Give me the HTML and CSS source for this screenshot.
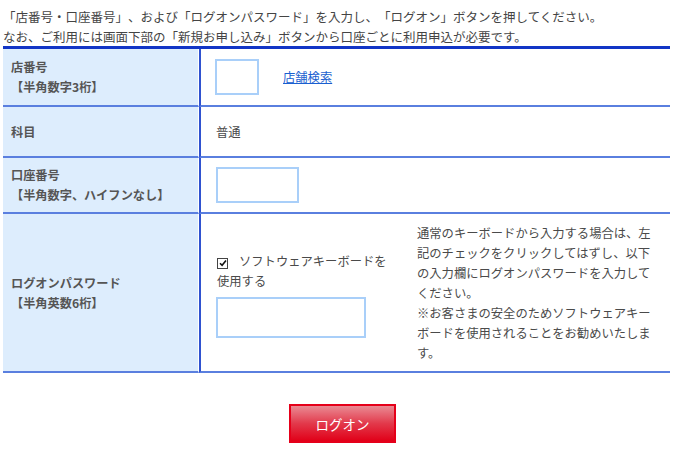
FILE: index.html
```html
<!DOCTYPE html>
<html lang="ja">
<head>
<meta charset="utf-8">
<title>ログオン</title>
<link rel="stylesheet" href="styles.css">
</head>
<body>
<div class="page">
  <p class="intro">「店番号・口座番号」、および「ログオンパスワード」を入力し、「ログオン」ボタンを押してください。<br>なお、ご利用には画面下部の「新規お申し込み」ボタンから口座ごとに利用申込が必要です。</p>
  <div class="form">
    <div class="label r1"><span>店番号</span><span class="note">【半角数字3桁】</span></div>
    <div class="value r1"><input class="inp inp-branch" type="text"><a class="link" href="#">店舗検索</a></div>

    <div class="label r2"><span>科目</span></div>
    <div class="value r2"><span class="plain">普通</span></div>

    <div class="label r3"><span>口座番号</span><span class="note">【半角数字、ハイフンなし】</span></div>
    <div class="value r3"><input class="inp inp-account" type="text"></div>

    <div class="label r4"><span>ログオンパスワード</span><span class="note">【半角英数6桁】</span></div>
    <div class="value r4">
      <div class="pw">
        <label class="swk"><span class="cb"><svg width="8" height="8" viewBox="0 0 8 8"><path d="M1 4.2 L3.1 6.3 L7 1.5" fill="none" stroke="#111" stroke-width="1.6"/></svg></span>ソフトウェアキーボードを使用する</label>
        <input class="inp inp-pw" type="password">
      </div>
      <p class="help">通常のキーボードから入力する場合は、左記のチェックをクリックしてはずし、以下の入力欄にログオンパスワードを入力してください。<br>※お客さまの安全のためソフトウェアキーボードを使用されることをお勧めいたします。</p>
    </div>
  </div>
  <div class="actions">
    <button class="btn" type="button">ログオン</button>
  </div>
</div>
</body>
</html>
```
FILE: styles.css
```css
html, body {
  margin: 0;
  padding: 0;
  background: #fff;
}
body {
  font-family: "Noto Sans CJK JP", "Noto Sans", sans-serif;
  font-size: 12.3px;
  color: #444;
  text-spacing-trim: space-all;
}
.page {
  padding: 7px 0 0 3px;
  width: 667px;
}
.intro {
  margin: 0;
  line-height: 19.5px;
  font-size: 12.5px;
  color: #444;
  white-space: nowrap;
}
.form {
  display: grid;
  grid-template-columns: 196px 1fr;
  border-top: 3px solid #1235c6;
}
.label {
  background: #ddedfd;
  border-right: 1px solid #fff;
  border-bottom: 2px solid #5a7fdf;
  padding-left: 8px;
  display: flex;
  flex-direction: column;
  justify-content: center;
  align-items: flex-start;
  font-weight: bold;
  color: #555;
  line-height: 20px;
  font-size: 12.2px;
}
.value {
  border-left: 2px solid #2f52d0;
  border-bottom: 2px solid #5a7fdf;
  padding-left: 14px;
  display: flex;
  align-items: center;
  color: #4a4a4a;
}
.r1 { height: 56px; }
.r2 { height: 49px; }
.r3 { height: 54px; }
.r4 { height: 157px; }

.inp {
  box-sizing: border-box;
  border: 2px solid #a9cff9;
  background: #fff;
  margin: 0;
  padding: 0;
  outline: none;
}
.inp-branch { width: 44px; height: 36px; }
.inp-account { width: 83px; height: 36px; margin-left: 1px; }
.inp-pw { width: 150px; height: 41px; margin-left: 1px; margin-top: 6px; }

.link {
  margin-left: 24px;
  color: #1a5fd0;
  text-decoration: underline;
}
.plain { margin-left: 1px; }

.pw {
  width: 174px;
  display: flex;
  flex-direction: column;
  align-items: flex-start;
  margin-top: 4px;
}
.swk {
  display: block;
  line-height: 20px;
  padding-left: 2px;
  color: #4a4a4a;
}
.cb {
  display: inline-flex;
  align-items: center;
  justify-content: center;
  box-sizing: border-box;
  width: 11px;
  height: 11px;
  border: 1px solid #444;
  margin-right: 11px;
  vertical-align: -1px;
  background: #fff;
}
.help {
  margin: 0 0 0 28px;
  width: 240px;
  line-height: 20px;
  color: #4a4a4a;
}
.actions {
  display: flex;
  justify-content: center;
  padding: 31px 0 0 12px;
}
.btn {
  box-sizing: border-box;
  width: 107px;
  height: 39px;
  border: 2px solid #e5001a;
  background: linear-gradient(#ea8a93, #e2394b 50%, #e10018);
  color: #fff;
  font-family: "Noto Sans CJK JP", "Noto Sans", sans-serif;
  font-size: 13.5px;
  padding: 0;
}
```
